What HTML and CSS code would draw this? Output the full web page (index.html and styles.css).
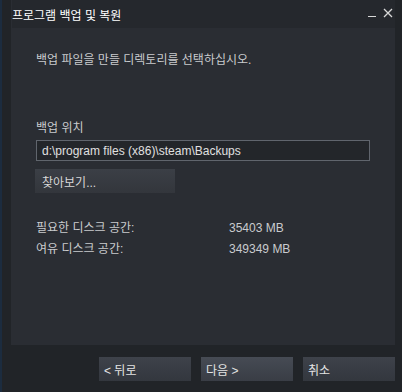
FILE: index.html
```html
<!DOCTYPE html>
<html lang="ko">
  <head>
    <meta charset="UTF-8" />
    <meta name="viewport" content="width=device-width, initial-scale=1.0" />
    <title>프로그램 백업 및 복원</title>
    <link rel="stylesheet" href="styles.css">
  </head>
  <body>
    <div class="window">
      <!-- Main panel -->
      <div class="panel">
        <div class="titlebar">
          <span class="title">프로그램 백업 및 복원</span>
          <div class="controls">
            <span class="minimize"></span>
            <svg class="close" width="10" height="10" viewBox="0 0 10 10">
              <path d="M1 1 L9 9 M9 1 L1 9" stroke="#d8d8d8" stroke-width="1.3" />
            </svg>
          </div>
        </div>

        <p class="intro">백업 파일을 만들 디렉토리를 선택하십시오.</p>

        <label class="field-label" for="backup-path">백업 위치</label>
        <input type="text" id="backup-path" class="path-input" value="d:\program files (x86)\steam\Backups" />
        <button type="button" class="browse-button">찾아보기...</button>

        <div class="space-info">
          <div class="space-row">
            <span class="space-name">필요한 디스크 공간:</span>
            <span class="space-value">35403 MB</span>
          </div>
          <div class="space-row">
            <span class="space-name">여유 디스크 공간:</span>
            <span class="space-value">349349 MB</span>
          </div>
        </div>
      </div>

      <!-- Footer buttons -->
      <div class="footer">
        <button type="button" class="nav-button">&lt; 뒤로</button>
        <button type="button" class="nav-button default">다음 &gt;</button>
        <button type="button" class="nav-button">취소</button>
      </div>
    </div>
  </body>
</html>
```

FILE: styles.css
```css
body {
  margin: 0;
  padding: 0;
  background-color: #212428;
  font-family: "Liberation Sans", "Noto Sans CJK KR", sans-serif;
  font-size: 12px;
  color: #c9cbce;
  overflow: hidden;
}

.window {
  width: 402px;
  height: 392px;
  border-left: 2px solid #1c2c3f;
  box-sizing: border-box;
}

.panel {
  margin: 0 7px 0 9px;
  height: 345px;
  background-color: #2a2d33;
  padding-left: 25px;
  box-sizing: border-box;
}

.titlebar {
  display: flex;
  justify-content: space-between;
  align-items: center;
  height: 28px;
  margin-left: -24px;
  background-color: #25282d;
}

.title {
  color: #ffffff;
  font-size: 12px;
}

.controls {
  display: flex;
  align-items: flex-end;
  gap: 7px;
  padding-right: 2px;
  margin-top: -3px;
}

.minimize {
  flex-shrink: 0;
  width: 8px;
  height: 1px;
  background-color: #d8d8d8;
  margin-bottom: 1px;
}

.close {
  flex-shrink: 0;
  display: block;
}

.intro {
  margin: 24px 0 0 0;
  line-height: 16px;
}

.field-label {
  display: block;
  margin-top: 52px;
  line-height: 16px;
}

.path-input {
  display: block;
  margin-top: 4px;
  width: 334px;
  height: 21px;
  box-sizing: border-box;
  background-color: #23262a;
  border: 1px solid #60656d;
  color: #e0e0e0;
  font-family: "Liberation Sans", sans-serif;
  font-size: 12px;
  padding: 0 5px;
  outline: none;
}

.browse-button {
  display: block;
  margin-top: 8px;
  margin-left: -1px;
  width: 140px;
  height: 24px;
  border: none;
  background: linear-gradient(#3b3f46, #33363c);
  color: #d8d8d8;
  font-family: "Liberation Sans", "Noto Sans CJK KR", sans-serif;
  font-size: 12px;
  text-align: left;
  padding: 0 7px;
}

.space-info {
  margin-top: 27px;
  display: flex;
  flex-direction: column;
  gap: 5px;
}

.space-row {
  display: flex;
  line-height: 16px;
}

.space-name {
  width: 193px;
}

.footer {
  display: flex;
  justify-content: flex-end;
  gap: 10px;
  padding: 12px 7px 0 0;
}

.nav-button {
  width: 92px;
  height: 24px;
  border: none;
  background: linear-gradient(#3e424a, #33373e);
  color: #e4e4e4;
  font-family: "Liberation Sans", "Noto Sans CJK KR", sans-serif;
  font-size: 12px;
  text-align: left;
  padding: 0 5px;
}

.nav-button.default {
  background: linear-gradient(#464b54, #393d45);
}
```
